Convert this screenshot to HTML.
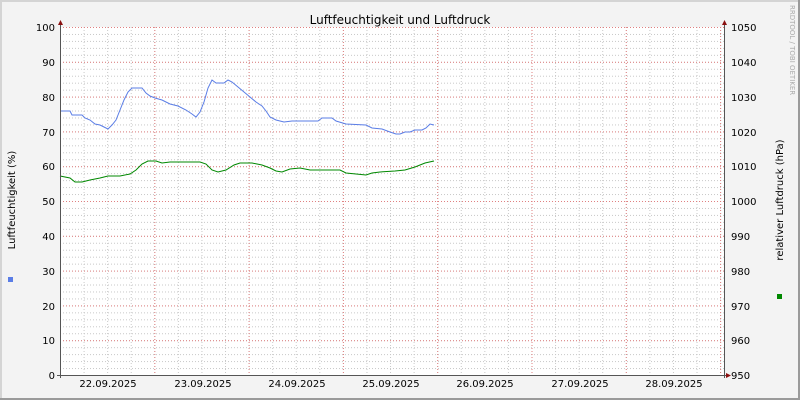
<!DOCTYPE html>
<html><head><meta charset="utf-8"><style>
html,body{margin:0;padding:0;background:#f3f3f3}
svg{display:block;font-family:"DejaVu Sans","Liberation Sans",sans-serif}
</style></head><body>
<svg width="800" height="400" viewBox="0 0 800 400" xmlns="http://www.w3.org/2000/svg">
<defs>
<pattern id="minH" x="0" y="27" width="800" height="6.96" patternUnits="userSpaceOnUse">
<line x1="0" y1="0.5" x2="800" y2="0.5" stroke="#c8c8c8" stroke-width="1" stroke-dasharray="1,2"/>
</pattern>
<pattern id="minV" x="60" y="0" width="23.575" height="400" patternUnits="userSpaceOnUse">
<line x1="0.5" y1="0" x2="0.5" y2="400" stroke="#c8c8c8" stroke-width="1" stroke-dasharray="1,2"/>
</pattern>
<pattern id="majH" x="0" y="27" width="800" height="34.8" patternUnits="userSpaceOnUse">
<line x1="0" y1="0.5" x2="800" y2="0.5" stroke="#e08080" stroke-width="1" stroke-dasharray="1,2"/>
</pattern>
<pattern id="majV" x="60" y="0" width="94.3" height="400" patternUnits="userSpaceOnUse">
<line x1="0.5" y1="0" x2="0.5" y2="400" stroke="#e08080" stroke-width="1" stroke-dasharray="1,2"/>
</pattern>
</defs>
<rect x="0" y="0" width="800" height="400" fill="#f3f3f3"/>
<rect x="0" y="0" width="2" height="400" fill="#d4d4d4"/>
<rect x="0" y="0" width="800" height="2" fill="#d4d4d4"/>
<rect x="798" y="0" width="2" height="400" fill="#9a9a9a"/>
<rect x="0" y="398" width="800" height="2" fill="#9a9a9a"/>
<rect x="60" y="27" width="665" height="348" fill="#ffffff"/>
<rect x="60" y="27" width="665" height="348" fill="url(#minH)"/>
<rect x="60" y="27" width="665" height="348" fill="url(#minV)"/>
<rect x="60" y="27" width="665" height="348" fill="url(#majH)"/>
<rect x="60" y="27" width="665" height="348" fill="url(#majV)"/>

<polyline fill="none" stroke="#5a7de6" stroke-width="1" points="60,111 70,111 72,115 82,115 85,118 90,120 95,124 100,125 104,127 108,129 112,125 116,120 120,110 124,100 128,92 132,88 136,88 142,88 146,93 150,96 155,98 162,100 170,104 178,106 186,110 192,114 196,117 200,112 204,102 208,88 212,80 216,83 224,83 228,80 232,82 238,87 244,92 250,97 256,102 262,106 266,111 270,117 276,120 284,122 292,121 300,121 318,121 322,118 332,118 336,121 346,124 366,125 372,128 382,129 390,132 396,134 400,134 405,132 410,132 415,130 422,130 426,128 430,124 434,125"/>
<polyline fill="none" stroke="#008800" stroke-width="1" points="60,176 70,178 75,182 82,182 90,180 100,178 108,176 120,176 130,174 136,170 142,164 148,161 156,161 162,163 170,162 180,162 190,162 200,162 206,164 212,170 218,172 226,170 234,165 240,163 252,163 262,165 270,168 276,171 282,172 290,169 300,168 310,170 340,170 346,173 356,174 366,175 372,173 380,172 395,171 405,170 415,167 425,163 434,161"/>

<line x1="60.5" y1="24" x2="60.5" y2="378" stroke="#555" stroke-width="1"/>
<line x1="724.5" y1="24" x2="724.5" y2="378" stroke="#555" stroke-width="1"/>
<line x1="57" y1="375.5" x2="728" y2="375.5" stroke="#555" stroke-width="1"/>
<polygon points="58,25 63,25 60.5,20" fill="#8b1010"/>
<polygon points="722,25 727,25 724.5,20" fill="#8b1010"/>
<polygon points="726,373 726,378 731,375.5" fill="#8b1010"/>

<text x="400" y="24" font-size="12" text-anchor="middle" fill="#000">Luftfeuchtigkeit und Luftdruck</text>
<g font-size="10" fill="#000" text-anchor="end">
<text x="55" y="31">100</text><text x="55" y="66">90</text><text x="55" y="101">80</text><text x="55" y="136">70</text><text x="55" y="170">60</text><text x="55" y="205">50</text><text x="55" y="240">40</text><text x="55" y="275">30</text><text x="55" y="310">20</text><text x="55" y="344">10</text><text x="55" y="379">0</text>
</g>
<g font-size="10" fill="#000">
<text x="731" y="31">1050</text><text x="731" y="66">1040</text><text x="731" y="101">1030</text><text x="731" y="136">1020</text><text x="731" y="170">1010</text><text x="731" y="205">1000</text><text x="731" y="240">990</text><text x="731" y="275">980</text><text x="731" y="310">970</text><text x="731" y="344">960</text><text x="731" y="379">950</text>
</g>
<g font-size="10" fill="#000" text-anchor="middle">
<text x="108" y="387">22.09.2025</text><text x="203" y="387">23.09.2025</text><text x="297" y="387">24.09.2025</text><text x="391" y="387">25.09.2025</text><text x="485" y="387">26.09.2025</text><text x="580" y="387">27.09.2025</text><text x="674" y="387">28.09.2025</text>
</g>
<text transform="translate(15,200) rotate(-90)" font-size="10" text-anchor="middle" fill="#000">Luftfeuchtigkeit (%)</text>
<text transform="translate(783,200) rotate(-90)" font-size="10" text-anchor="middle" fill="#000">relativer Luftdruck (hPa)</text>
<text transform="translate(790,5) rotate(90)" font-size="7" fill="#aaa">RRDTOOL / TOBI OETIKER</text>
<rect x="8" y="277" width="5" height="5" fill="#5a7de6"/>
<rect x="777" y="294" width="5" height="5" fill="#008800"/>
</svg>
</body></html>
